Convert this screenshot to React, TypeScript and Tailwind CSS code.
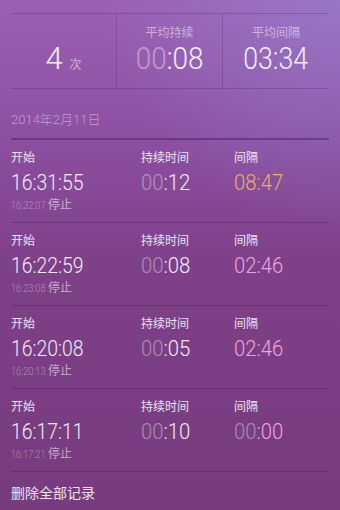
import React from 'react';

type Row = {
  start: string;
  stop: string;
  dur: string;
  gapDim: string;
  gap: string;
  gapColor: string;
};

const ROWS: Row[] = [
  { start: '16:31:55', stop: '16:32:07', dur: '12', gapDim: '', gap: '08:47', gapColor: 'text-[#e9b06b]' },
  { start: '16:22:59', stop: '16:23:08', dur: '08', gapDim: '', gap: '02:46', gapColor: 'text-[#eca6de]' },
  { start: '16:20:08', stop: '16:20:13', dur: '05', gapDim: '', gap: '02:46', gapColor: 'text-[#eca6de]' },
  { start: '16:17:11', stop: '16:17:21', dur: '10', gapDim: '00', gap: ':00', gapColor: 'text-[#eca6de]' },
];

const font = "font-['Roboto','Noto_Sans_CJK_SC',sans-serif]";
const cjk = "font-['Noto_Sans_CJK_SC',sans-serif]";

const RecordRow: React.FC<{ row: Row }> = ({ row }) => (
  <div className="grid grid-cols-[130px_93px_1fr] h-[83px] pt-[9px] border-b border-[rgba(70,20,90,0.32)]">
    <div className="flex flex-col">
      <span className={`${cjk} text-[12px] leading-[16px] h-[16px] text-white/85`}>开始</span>
      <span className={`${font} font-light text-[22.5px] leading-[24px] h-[24px] mt-[5px] text-white/90 inline-block origin-left scale-x-[0.86] whitespace-nowrap`}>
        {row.start}
      </span>
      <div className="mt-[3px] h-[14px] flex items-baseline whitespace-nowrap">
        <span className={`${font} font-light text-[10px] leading-[14px] text-white/40 inline-block origin-left scale-x-[0.92] w-[36px]`}>{row.stop}</span>
        <span className={`${cjk} text-[12px] leading-[14px] text-white/55 ml-[1px]`}>停止</span>
      </div>
    </div>
    <div className="flex flex-col">
      <span className={`${cjk} text-[12px] leading-[16px] h-[16px] text-white/85`}>持续时间</span>
      <span className={`${font} font-light text-[22.5px] leading-[24px] h-[24px] mt-[5px] inline-block origin-left scale-x-[0.9] whitespace-nowrap`}>
        <span className="text-white/40">00</span>
        <span className="text-white/90">:{row.dur}</span>
      </span>
    </div>
    <div className="flex flex-col">
      <span className={`${cjk} text-[12px] leading-[16px] h-[16px] text-white/85`}>间隔</span>
      <span className={`${font} font-light text-[22.5px] leading-[24px] h-[24px] mt-[5px] inline-block origin-left scale-x-[0.9] whitespace-nowrap`}>
        {row.gapDim && <span className="text-white/40">{row.gapDim}</span>}
        <span className={row.gapColor}>{row.gap}</span>
      </span>
    </div>
  </div>
);

const App: React.FC = () => {
  return (
    <div className="w-[340px] h-[510px] overflow-hidden px-[11px] bg-[radial-gradient(ellipse_70%_45%_at_100%_0%,rgba(150,135,215,0.55),transparent),linear-gradient(180deg,#9c60b2_0%,#8e51a3_24%,#7e4088_52%,#773b7e_100%)]">
      {/* summary */}
      <div className="mt-[13px] grid grid-cols-[105px_106px_1fr] h-[76px] border-t border-b border-[rgba(80,30,100,0.28)]">
        <div className="flex items-start justify-center pt-[29px]">
          <span className={`${font} font-light text-[31px] leading-[32px] text-white/90`}>4</span>
          <span className={`${cjk} text-[12px] text-white/55 ml-[7px] mt-[12px]`}>次</span>
        </div>
        <div className="flex flex-col items-center pt-[10px] border-l border-[rgba(80,30,100,0.28)]">
          <span className={`${cjk} text-[12px] leading-[16px] text-white/50`}>平均持续</span>
          <span className={`${font} font-light text-[31px] leading-[32px] mt-[3px] inline-block scale-x-[0.9] whitespace-nowrap`}>
            <span className="text-white/40">00</span>
            <span className="text-white/90">:08</span>
          </span>
        </div>
        <div className="flex flex-col items-center pt-[10px] border-l border-[rgba(80,30,100,0.28)]">
          <span className={`${cjk} text-[12px] leading-[16px] text-white/50`}>平均间隔</span>
          <span className={`${font} font-light text-[31px] leading-[32px] mt-[3px] inline-block scale-x-[0.86] whitespace-nowrap text-white/90`}>
            03:34
          </span>
        </div>
      </div>

      {/* date */}
      <div className={`${font} font-light text-[13px] leading-[16px] mt-[23px] mb-[10px] text-white/45 whitespace-nowrap`}>
        2014年2月11日
      </div>
      <div className="h-[2px] bg-[rgba(60,20,85,0.4)]" />

      {ROWS.map((row) => (
        <RecordRow key={row.start} row={row} />
      ))}

      <div className={`${cjk} text-[14px] leading-[20px] pt-[10px] text-white/85`}>删除全部记录</div>
    </div>
  );
};

export default App;
